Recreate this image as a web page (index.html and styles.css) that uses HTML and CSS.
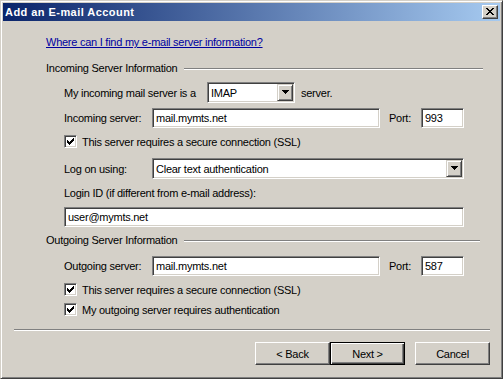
FILE: index.html
```html
<!DOCTYPE html>
<html>
<head lang="en">
    <meta charset="UTF-8">
    <title>Add an E-mail Account</title>
    <link rel="stylesheet" href="styles.css">
</head>
<body>
    <div class="window">
        <div class="titlebar">
            <span class="title">Add an E-mail Account</span>
            <span class="close">
                <svg width="8" height="7" viewBox="0 0 8 7" shape-rendering="crispEdges">
                    <path d="M0 0h2v1h-2zM6 0h2v1h-2zM1 1h2v1h-2zM5 1h2v1h-2zM2 2h4v1h-4zM3 3h2v1h-2zM2 4h4v1h-4zM1 5h2v1h-2zM5 5h2v1h-2zM0 6h2v1h-2zM6 6h2v1h-2z" fill="#000"/>
                </svg>
            </span>
        </div>
        <div class="panel">
            <div class="link-row"><a class="link" href="#">Where can I find my e-mail server information?</a></div>

            <div class="group">
                <span>Incoming Server Information</span>
                <span class="etch"></span>
            </div>

            <div class="row r-type">
                <span class="lbl-wide">My incoming mail server is a</span>
                <div class="combo combo-type">
                    <span class="combo-text">IMAP</span>
                    <span class="arrow">
                        <svg width="7" height="4" viewBox="0 0 7 4" shape-rendering="crispEdges"><path d="M0 0h7v1h-7zM1 1h5v1h-5zM2 2h3v1h-3zM3 3h1v1h-1z" fill="#000"/></svg>
                    </span>
                </div>
                <span class="after">server.</span>
            </div>

            <div class="row r-in">
                <span class="lbl">Incoming server:</span>
                <div class="field field-server">mail.mymts.net</div>
                <span class="lbl-port">Port:</span>
                <div class="field field-port">993</div>
            </div>

            <div class="row r-check1">
                <span class="check">
                    <svg width="7" height="7" viewBox="0 0 7 7" shape-rendering="crispEdges"><path d="M6 0h1v1h-1zM5 1h2v1h-2zM0 2h1v1h-1zM4 2h3v1h-3zM0 3h2v1h-2zM3 3h3v1h-3zM0 4h5v1h-5zM1 5h3v1h-3zM2 6h1v1h-1z" fill="#000"/></svg>
                </span>
                <span class="check-lbl">This server requires a secure connection (SSL)</span>
            </div>

            <div class="row r-logon">
                <span class="lbl">Log on using:</span>
                <div class="combo combo-auth">
                    <span class="combo-text">Clear text authentication</span>
                    <span class="arrow">
                        <svg width="7" height="4" viewBox="0 0 7 4" shape-rendering="crispEdges"><path d="M0 0h7v1h-7zM1 1h5v1h-5zM2 2h3v1h-3zM3 3h1v1h-1z" fill="#000"/></svg>
                    </span>
                </div>
            </div>

            <div class="row r-loginlbl">Login ID (if different from e-mail address):</div>

            <div class="row r-login">
                <div class="field field-login">user@mymts.net</div>
            </div>

            <div class="group g-out">
                <span>Outgoing Server Information</span>
                <span class="etch etch-out"></span>
            </div>

            <div class="row r-out">
                <span class="lbl">Outgoing server:</span>
                <div class="field field-server">mail.mymts.net</div>
                <span class="lbl-port">Port:</span>
                <div class="field field-port">587</div>
            </div>

            <div class="row r-check2">
                <span class="check">
                    <svg width="7" height="7" viewBox="0 0 7 7" shape-rendering="crispEdges"><path d="M6 0h1v1h-1zM5 1h2v1h-2zM0 2h1v1h-1zM4 2h3v1h-3zM0 3h2v1h-2zM3 3h3v1h-3zM0 4h5v1h-5zM1 5h3v1h-3zM2 6h1v1h-1z" fill="#000"/></svg>
                </span>
                <span class="check-lbl">This server requires a secure connection (SSL)</span>
            </div>

            <div class="row r-check3">
                <span class="check">
                    <svg width="7" height="7" viewBox="0 0 7 7" shape-rendering="crispEdges"><path d="M6 0h1v1h-1zM5 1h2v1h-2zM0 2h1v1h-1zM4 2h3v1h-3zM0 3h2v1h-2zM3 3h3v1h-3zM0 4h5v1h-5zM1 5h3v1h-3zM2 6h1v1h-1z" fill="#000"/></svg>
                </span>
                <span class="check-lbl">My outgoing server requires authentication</span>
            </div>

            <div class="separator"></div>

            <div class="buttons">
                <span class="btn">&lt; Back</span>
                <span class="btn btn-default">Next &gt;</span>
                <span class="btn btn-cancel">Cancel</span>
            </div>
        </div>
    </div>
</body>
</html>
```

FILE: styles.css
```css
body {
    margin: 0;
    font-family: "Liberation Sans", Arial, sans-serif;
    font-size: 11px;
    letter-spacing: -0.25px;
    color: #000;
}

.window {
    width: 503px;
    height: 379px;
    box-sizing: border-box;
    background: #D4D0C8;
    border: 1px solid;
    border-color: #D4D0C8 #404040 #404040 #D4D0C8;
    box-shadow: inset 1px 1px #fff, inset -1px -1px #808080;
    padding: 2px;
    display: flex;
    flex-direction: column;
}

.titlebar {
    height: 18px;
    display: flex;
    align-items: center;
    padding: 0 2px;
    background: linear-gradient(to right, #0A246A, #A6CAF0);
}

.title {
    color: #fff;
    font-weight: bold;
    letter-spacing: 0.45px;
}

.close {
    margin-left: auto;
    width: 16px;
    height: 14px;
    box-sizing: border-box;
    background: #D4D0C8;
    border: 1px solid;
    border-color: #fff #404040 #404040 #fff;
    box-shadow: inset -1px -1px #808080;
    display: flex;
    align-items: center;
    justify-content: center;
    padding: 0 1px 1px 0;
}

.close svg, .arrow svg, .check svg {
    display: block;
}

.panel {
    flex: 1;
    padding: 0 10px 0 11px;
    display: flex;
    flex-direction: column;
}

.link-row {
    margin-top: 14px;
    height: 14px;
    line-height: 14px;
    padding-left: 32px;
}

.link {
    color: #0000A0;
    text-decoration: underline;
}

.group {
    margin-top: 12px;
    height: 14px;
    display: flex;
    align-items: center;
    padding-left: 32px;
}

.g-out {
    margin-top: 6px;
}

.etch {
    flex: 1;
    height: 2px;
    box-sizing: border-box;
    border-top: 1px solid #808080;
    border-bottom: 1px solid #fff;
    margin: 1px 7px 0 7px;
}

.etch-out {
    margin-right: 10px;
}

.row {
    display: flex;
    align-items: center;
    padding-left: 50px;
}

.r-type { margin-top: 7px; height: 21px; }
.r-in { margin-top: 5px; height: 20px; }
.r-check1 { margin-top: 7px; height: 13px; }
.r-logon { margin-top: 10px; height: 21px; }
.r-loginlbl { margin-top: 7px; height: 14px; }
.r-login { margin-top: 7px; height: 20px; }
.r-out { margin-top: 9px; height: 20px; }
.r-check2 { margin-top: 7px; height: 13px; }
.r-check3 { margin-top: 7px; height: 13px; }

.lbl-wide {
    width: 143px;
}

.lbl {
    width: 88px;
}

.after {
    margin-left: 6px;
}

.lbl-port {
    width: 32px;
    margin-left: 9px;
}

.field, .combo {
    box-sizing: border-box;
    background: #fff;
    border: 1px solid;
    border-color: #808080 #fff #fff #808080;
    box-shadow: inset 1px 1px #404040, inset -1px -1px #D4D0C8;
    display: flex;
    align-items: center;
}

.field {
    height: 20px;
    padding-left: 3px;
}

.field-server { width: 228px; }
.field-port { width: 43px; }
.field-login { width: 400px; }

.combo {
    height: 21px;
    padding: 1px 1px 1px 3px;
}

.combo-type { width: 88px; }
.combo-auth { width: 312px; }

.combo-text {
    flex: 1;
}

.arrow {
    width: 16px;
    height: 17px;
    box-sizing: border-box;
    background: #D4D0C8;
    border: 1px solid;
    border-color: #D4D0C8 #404040 #404040 #D4D0C8;
    box-shadow: inset 1px 1px #fff, inset -1px -1px #808080;
    display: flex;
    align-items: center;
    justify-content: center;
    padding-bottom: 1px;
}

.check {
    width: 13px;
    height: 13px;
    box-sizing: border-box;
    background: #fff;
    border: 1px solid;
    border-color: #808080 #fff #fff #808080;
    box-shadow: inset 1px 1px #404040, inset -1px -1px #D4D0C8;
    display: flex;
    padding: 2px 0 0 2px;
}

.check-lbl {
    margin-left: 5px;
}

.separator {
    margin-top: 13px;
    height: 2px;
    box-sizing: border-box;
    border-top: 1px solid #808080;
    border-bottom: 1px solid #fff;
}

.buttons {
    margin-top: 11px;
    display: flex;
    justify-content: flex-end;
}

.btn {
    width: 75px;
    height: 23px;
    box-sizing: border-box;
    border: 1px solid;
    border-color: #fff #404040 #404040 #fff;
    box-shadow: inset -1px -1px #808080;
    display: flex;
    align-items: center;
    justify-content: center;
}

.btn-default {
    border-color: #000;
    box-shadow: inset 1px 1px #fff, inset -1px -1px #404040, inset -2px -2px #808080;
}

.btn-cancel {
    margin-left: 10px;
}
```
